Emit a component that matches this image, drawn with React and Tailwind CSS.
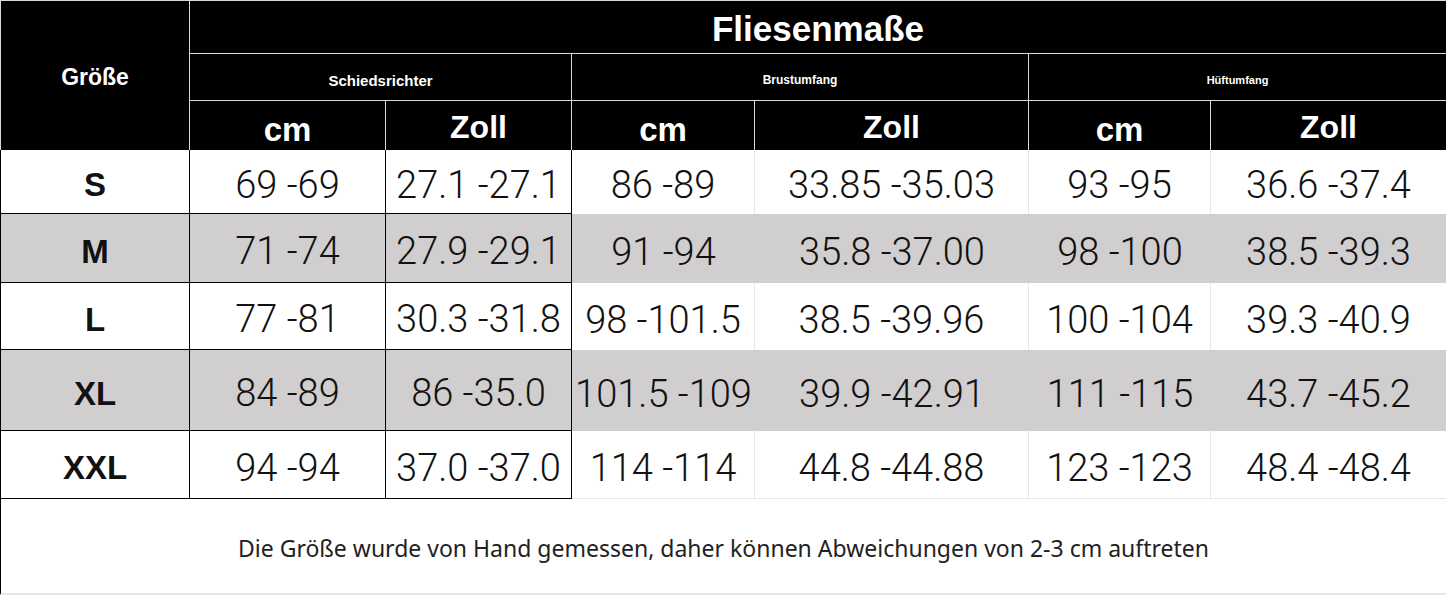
import React from "react";

const rows = [
  { size: "S", gray: false, vals: ["69 -69", "27.1 -27.1", "86 -89", "33.85 -35.03", "93 -95", "36.6 -37.4"] },
  { size: "M", gray: true, vals: ["71 -74", "27.9 -29.1", "91 -94", "35.8 -37.00", "98 -100", "38.5 -39.3"] },
  { size: "L", gray: false, vals: ["77 -81", "30.3 -31.8", "98 -101.5", "38.5 -39.96", "100 -104", "39.3 -40.9"] },
  { size: "XL", gray: true, vals: ["84 -89", "86 -35.0", "101.5 -109", "39.9 -42.91", "111 -115", "43.7 -45.2"] },
  { size: "XXL", gray: false, vals: ["94 -94", "37.0 -37.0", "114 -114", "44.8 -44.88", "123 -123", "48.4 -48.4"] },
];

const head = "bg-black text-white font-bold flex justify-center border-[#d9d9d9] leading-none";
const num = "flex items-center justify-center text-[38px] font-light text-[#111] pt-[6px] leading-none";

export default function App() {
  return (
    <div
      className="w-[1446px] h-[595px] bg-white overflow-hidden grid grid-cols-[190px_196px_186px_183px_274px_182px_235px] grid-rows-[54px_47px_49px_64px_69px_67px_81px_68px_96px]"
      style={{ fontFamily: '"Liberation Sans", Arial, sans-serif' }}
    >
      {/* header */}
      <div className={`${head} row-span-3 items-center border-t border-l border-r text-[23px] pt-[4px]`}>Größe</div>
      <div className={`${head} col-span-6 items-center border-t border-b text-[35px] pt-[2px]`}>Fliesenmaße</div>

      <div className={`${head} col-span-2 items-center border-r border-b text-[15px] pt-[6px]`}>Schiedsrichter</div>
      <div className={`${head} col-span-2 items-center border-r border-b text-[12px] pt-[6px]`}>Brustumfang</div>
      <div className={`${head} col-span-2 items-center border-b text-[11px] pt-[6px]`}>Hüftumfang</div>

      {["cm", "Zoll", "cm", "Zoll", "cm", "Zoll"].map((t, i) => (
        <div
          key={i}
          className={`${head} items-end ${i < 5 ? "border-r" : ""} ${t === "cm" ? "text-[33px] pb-[4px]" : "text-[32px] pb-[7px]"}`}
        >
          {t}
        </div>
      ))}

      {/* body */}
      {rows.map((r) => {
        const bg = r.gray ? "bg-[#d0cecf]" : "bg-white";
        const last = r.size === "XXL";
        return (
          <React.Fragment key={r.size}>
            <div className={`${bg} flex items-center justify-center font-bold text-[33px] leading-none text-[#111] border-l border-r border-b border-black pt-[6px]`}>
              {r.size}
            </div>
            {r.vals.map((v, i) => {
              let b = "";
              if (i < 2) b = "border-r border-b border-black";
              else if (!r.gray) b = `${i < 5 ? "border-r" : ""} ${last ? "border-b" : ""} border-[#e6e6e6]`;
              return (
                <div
                  key={i}
                  className={`${bg} ${num} ${b}`}
                  style={{ fontFamily: 'Roboto, "Liberation Sans", sans-serif' }}
                >
                  {v}
                </div>
              );
            })}
          </React.Fragment>
        );
      })}

      {/* footer */}
      <div
        className="col-span-7 flex items-center justify-center border-l border-black border-b-2 border-b-[#e6e6e6] text-[23px] text-[#222] pt-[4px]"
        style={{ fontFamily: '"Noto Sans", sans-serif' }}
      >
        Die Größe wurde von Hand gemessen, daher können Abweichungen von 2-3 cm auftreten
      </div>
    </div>
  );
}
